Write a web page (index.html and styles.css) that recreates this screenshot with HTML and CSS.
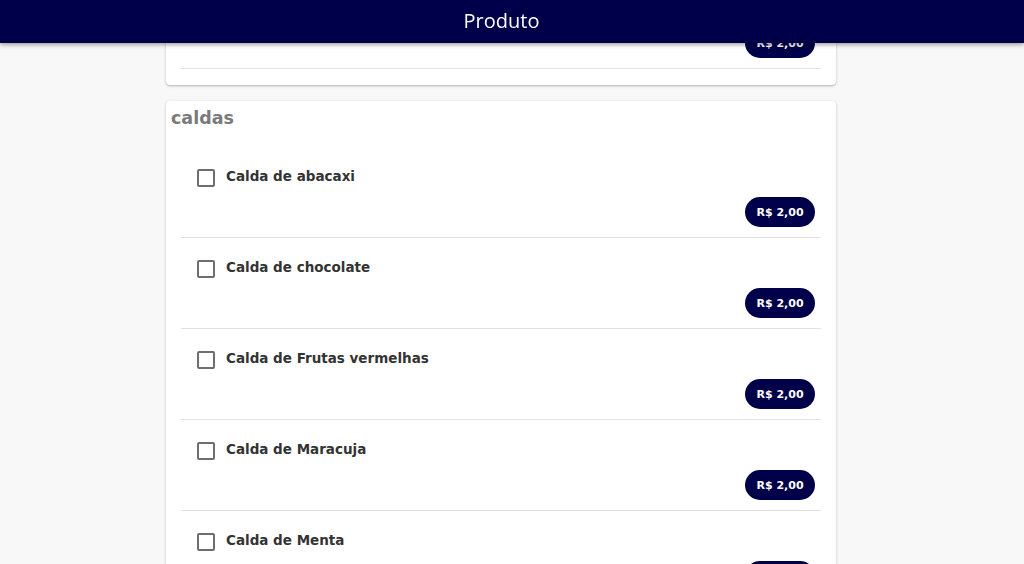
FILE: index.html
```html
<!DOCTYPE html>
<html lang="pt-BR">
<head>
<meta charset="utf-8">
<title>Produto</title>
<link rel="stylesheet" href="styles.css">
</head>
<body>
<header class="topbar"><h1 class="topbar-title">Produto</h1></header>
<main class="content">
  <section class="group">
    <h2 class="group-title">coberturas</h2>
    <ul class="options">
      <li class="option">
        <label class="option-row"><span class="check"></span><span class="option-name">Cobertura de caramelo</span></label>
        <div class="price-row"><span class="price">R$ 2,00</span></div>
      </li>
    </ul>
  </section>
  <section class="group">
    <h2 class="group-title">caldas</h2>
    <ul class="options">
      <li class="option">
        <label class="option-row"><span class="check"></span><span class="option-name">Calda de abacaxi</span></label>
        <div class="price-row"><span class="price">R$ 2,00</span></div>
      </li>
      <li class="option">
        <label class="option-row"><span class="check"></span><span class="option-name">Calda de chocolate</span></label>
        <div class="price-row"><span class="price">R$ 2,00</span></div>
      </li>
      <li class="option">
        <label class="option-row"><span class="check"></span><span class="option-name">Calda de Frutas vermelhas</span></label>
        <div class="price-row"><span class="price">R$ 2,00</span></div>
      </li>
      <li class="option">
        <label class="option-row"><span class="check"></span><span class="option-name">Calda de Maracuja</span></label>
        <div class="price-row"><span class="price">R$ 2,00</span></div>
      </li>
      <li class="option">
        <label class="option-row"><span class="check"></span><span class="option-name">Calda de Menta</span></label>
        <div class="price-row"><span class="price">R$ 2,00</span></div>
      </li>
      <li class="option">
        <label class="option-row"><span class="check"></span><span class="option-name">Calda de Morango</span></label>
        <div class="price-row"><span class="price">R$ 2,00</span></div>
      </li>
    </ul>
  </section>
</main>
<script src="script.js"></script>
</body>
</html>
```
FILE: styles.css
```css
html {
  scrollbar-width: none;
  scroll-behavior: auto;
}
html::-webkit-scrollbar { display: none; }

body {
  margin: 0;
  background: #f8f8f8;
  font-family: "DejaVu Sans", Verdana, sans-serif;
  color: #333;
}

.topbar {
  position: fixed;
  top: 0;
  left: 0;
  right: 0;
  height: 43px;
  background: #00004a;
  box-shadow: 0 2px 4px rgba(0, 0, 0, 0.35);
  z-index: 10;
  padding: 0 21px 2px 0;
  box-sizing: border-box;
  display: flex;
  align-items: center;
  justify-content: center;
}

.topbar-title {
  margin: 0;
  color: #fff;
  font-family: "Open Sans", sans-serif;
  font-weight: 500;
  font-size: 20px;
  line-height: 28px;
}

.content {
  padding: 59px 22px 40px 0;
  display: flex;
  flex-direction: column;
  align-items: center;
  gap: 16px;
}

.group {
  width: 670px;
  background: #fff;
  border-radius: 4px;
  box-shadow: 0 1px 3px rgba(0, 0, 0, 0.22), 0 1px 1px rgba(0, 0, 0, 0.08);
}

.group-title {
  margin: 0;
  padding: 5px 5px 0;
  font-size: 17.5px;
  line-height: 24px;
  font-weight: bold;
  color: #7a7a7a;
}

.options {
  list-style: none;
  margin: 0;
  padding: 17px 15px 16px;
}

.option {
  padding: 20px 6px 10px 16px;
  border-bottom: 1px solid #e2e2e2;
}

.option-row {
  display: flex;
  align-items: center;
  gap: 11px;
  height: 22px;
}

.check {
  width: 18px;
  height: 18px;
  box-sizing: border-box;
  border: 2px solid #6e6e6e;
  border-radius: 2px;
  flex: none;
}

.option-name {
  font-size: 13.5px;
  line-height: 18px;
  padding-bottom: 5px;
  font-weight: bold;
  color: #333;
}

.price-row {
  display: flex;
  justify-content: flex-end;
  margin-top: 8px;
}

.price {
  width: 70px;
  height: 30px;
  border-radius: 15px;
  background: #00004a;
  color: #fff;
  font-size: 11px;
  font-weight: bold;
  display: flex;
  align-items: center;
  justify-content: center;
}
```
FILE: script.js
```js
window.scrollTo(0, 127);
```
